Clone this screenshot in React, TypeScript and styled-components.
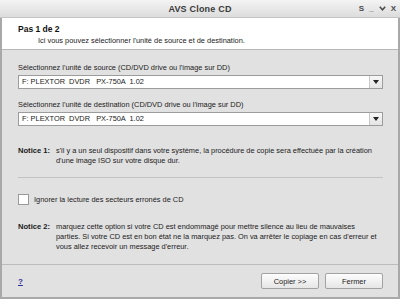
import React from "react";
import styled, { createGlobalStyle } from "styled-components";

const GlobalStyle = createGlobalStyle`
  html, body {
    margin: 0;
    padding: 0;
    background: #ffffff;
  }
  body {
    font-family: "Liberation Sans", Arial, sans-serif;
  }
`;

const Window = styled.div`
  width: 400px;
  height: 299px;
  box-sizing: border-box;
  border: 2px solid #a9a9a9;
  border-top: none;
  background: #e1e1e1;
  display: flex;
  flex-direction: column;
  color: #1a1a1a;
  font-size: 7.4px;
`;

const TitleBar = styled.div`
  height: 17px;
  flex: none;
  display: grid;
  grid-template-columns: 1fr auto 1fr;
  align-items: center;
  background: linear-gradient(#f4f4f4, #dcdcdc);
  border-bottom: 1px solid #c4c4c4;
  margin: 0 -2px;
  padding: 0 4px;
`;

const Title = styled.span`
  grid-column: 2;
  font-size: 9px;
  font-weight: bold;
  color: #3a3a3a;
  letter-spacing: 0.2px;
`;

const Controls = styled.div`
  justify-self: end;
  display: flex;
  align-items: center;
  gap: 5px;
  color: #4a4a4a;
  font-size: 8px;
  font-weight: bold;
`;

const Header = styled.div`
  height: 32px;
  flex: none;
  background: #ffffff;
  border-bottom: 1px solid #b8b8b8;
  padding: 5px 0 0 16px;
  box-sizing: border-box;
`;

const StepTitle = styled.div`
  font-size: 8.5px;
  font-weight: bold;
  line-height: 12px;
  color: #111;
`;

const StepHint = styled.div`
  padding-left: 20px;
  line-height: 12px;
`;

const Body = styled.div`
  flex: 1;
  padding: 12px 15px 0 16px;
  display: flex;
  flex-direction: column;
`;

const Field = styled.div`
  display: flex;
  flex-direction: column;
  gap: 2px;
  margin-bottom: 10px;
`;

const Label = styled.div`
  line-height: 11px;
`;

const Select = styled.div`
  height: 14px;
  box-sizing: border-box;
  border: 1px solid #9c9c9c;
  background: #ffffff;
  display: flex;
  align-items: stretch;
`;

const SelectValue = styled.div`
  flex: 1;
  padding-left: 3px;
  white-space: pre;
  line-height: 12px;
`;

const SelectArrow = styled.div`
  width: 12px;
  border-left: 1px solid #c8c8c8;
  background: linear-gradient(#f7f7f7, #e4e4e4);
  display: flex;
  align-items: center;
  justify-content: center;
`;

const Notice = styled.div<{ $top: number }>`
  display: grid;
  grid-template-columns: 38px 1fr;
  line-height: 10px;
  margin-top: ${(p) => p.$top}px;
`;

const NoticeTag = styled.span`
  font-weight: bold;
  font-size: 7.6px;
`;

const Divider = styled.div`
  height: 1px;
  background: #c2c2c2;
  margin: 11px 0 0;
`;

const CheckRow = styled.label`
  display: flex;
  align-items: center;
  gap: 5px;
  margin-top: 16px;
  line-height: 11px;
`;

const CheckBox = styled.span`
  width: 11px;
  height: 11px;
  box-sizing: border-box;
  border: 1px solid #9a9a9a;
  background: #ffffff;
`;

const Footer = styled.div`
  height: 33px;
  flex: none;
  border-top: 1px solid #bcbcbc;
  display: flex;
  align-items: center;
  padding: 0 15px 0 16px;
  box-sizing: border-box;
`;

const Help = styled.a`
  color: #2b2b9a;
  font-weight: bold;
  font-size: 8px;
  text-decoration: underline;
  flex: 1;
`;

const Buttons = styled.div`
  display: flex;
  gap: 6px;
`;

const Button = styled.button`
  width: 58px;
  height: 16px;
  padding: 0;
  border: 1px solid #a2a2a2;
  border-radius: 2px;
  background: linear-gradient(#fdfdfd, #e6e6e6);
  font-family: "Liberation Sans", Arial, sans-serif;
  font-size: 7.4px;
  color: #1a1a1a;
`;

const Arrow = () => (
  <svg width="6" height="4" viewBox="0 0 6 4">
    <path d="M0 0h6L3 4z" fill="#222" />
  </svg>
);

const Chevron = () => (
  <svg width="7" height="5" viewBox="0 0 7 5">
    <path d="M0.8 0.8L3.5 3.8L6.2 0.8" fill="none" stroke="#4a4a4a" strokeWidth="1.5" />
  </svg>
);

const drive = "F: PLEXTOR  DVDR   PX-750A  1.02";

const App = (): React.ReactElement => {
  return (
    <>
      <GlobalStyle />
      <Window>
        <TitleBar>
          <Title>AVS Clone CD</Title>
          <Controls>
            <span>S</span>
            <span>_</span>
            <Chevron />
            <span>X</span>
          </Controls>
        </TitleBar>
        <Header>
          <StepTitle>Pas 1 de 2</StepTitle>
          <StepHint>Ici vous pouvez sélectionner l'unité de source et de destination.</StepHint>
        </Header>
        <Body>
          <Field>
            <Label>Sélectionnez l'unité de source (CD/DVD drive ou l'image sur DD)</Label>
            <Select>
              <SelectValue>{drive}</SelectValue>
              <SelectArrow>
                <Arrow />
              </SelectArrow>
            </Select>
          </Field>
          <Field>
            <Label>Sélectionnez l'unité de destination (CD/DVD drive ou l'image sur DD)</Label>
            <Select>
              <SelectValue>{drive}</SelectValue>
              <SelectArrow>
                <Arrow />
              </SelectArrow>
            </Select>
          </Field>
          <Notice $top={10}>
            <NoticeTag>Notice 1:</NoticeTag>
            <span>
              s'il y a un seul dispositif dans votre système, la procédure de copie sera effectuée par la création
              <br />
              d'une image ISO sur votre disque dur.
            </span>
          </Notice>
          <Divider />
          <CheckRow>
            <CheckBox />
            Ignorer la lecture des secteurs erronés de CD
          </CheckRow>
          <Notice $top={17}>
            <NoticeTag>Notice 2:</NoticeTag>
            <span>
              marquez cette option si votre CD est endommagé pour mettre silence au lieu de mauvaises
              <br />
              parties.  Si votre CD est en bon état ne la marquez pas. On va arrêter le copiage en cas d'erreur et
              <br />
              vous allez recevoir un message d'erreur.
            </span>
          </Notice>
        </Body>
        <Footer>
          <Help>?</Help>
          <Buttons>
            <Button>Copier &gt;&gt;</Button>
            <Button>Fermer</Button>
          </Buttons>
        </Footer>
      </Window>
    </>
  );
};

export default App;
